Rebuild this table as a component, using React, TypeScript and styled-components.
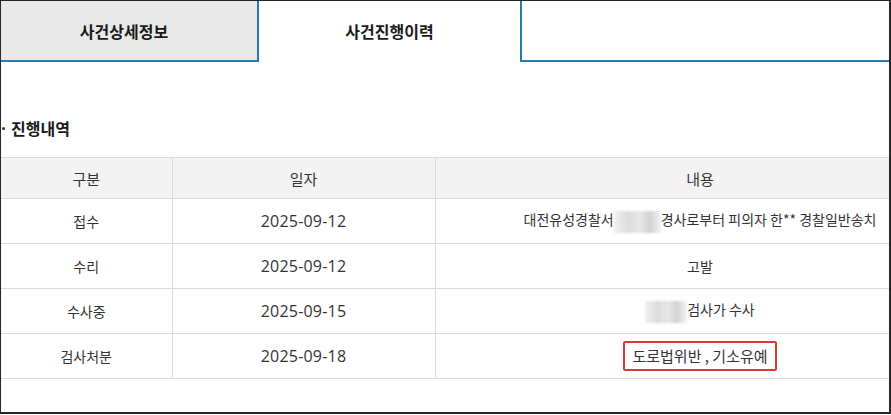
import React from "react";
import styled, { createGlobalStyle } from "styled-components";

const Global = createGlobalStyle`
  html, body { margin: 0; padding: 0; background: #ffffff; }
  body { font-family: "Noto Sans CJK KR", "Noto Sans", sans-serif; color: #222; }
`;

const Frame = styled.div`
  box-sizing: border-box;
  width: 891px;
  height: 414px;
  border: 2px solid #262626;
  border-top-width: 1px;
  border-left-width: 1px;
  overflow: hidden;
  background: #fff;
`;

const Tabs = styled.div`
  display: grid;
  grid-template-columns: 258px 263px 1fr;
  height: 61px;
`;

const Tab = styled.div<{ $active?: boolean; $empty?: boolean }>`
  box-sizing: border-box;
  display: flex;
  align-items: center;
  justify-content: center;
  font-size: 16px;
  font-weight: 700;
  color: #1a1a1a;
  background: ${(p) => (p.$active || p.$empty ? "#ffffff" : "#e9e9e9")};
  border-bottom: ${(p) => (p.$active ? "none" : "2px solid #2a7aae")};
  border-right: ${(p) => (p.$empty ? "none" : "2px solid #2a7aae")};
  padding-bottom: ${(p) => (p.$active ? "2px" : "0")};
  padding-right: ${(p) => (p.$active || p.$empty ? "0" : "10px")};
`;

const Section = styled.div`
  padding-top: 54px;
`;

const Title = styled.h3`
  margin: 0 0 17px 0;
  font-size: 16px;
  font-weight: 700;
  color: #1a1a1a;
  line-height: 24px;
  display: flex;
  align-items: center;
  gap: 6px;
  &::before {
    content: "";
    width: 3px;
    height: 3px;
    background: #333;
    border-radius: 50%;
    margin-left: 1px;
  }
`;

const Table = styled.table`
  border-collapse: collapse;
  width: 964px;
  table-layout: fixed;
`;

const Th = styled.th`
  height: 40px;
  padding: 0;
  background: #f3f3f3;
  border-top: 1px solid #dcdcdc;
  border-bottom: 1px solid #dcdcdc;
  border-right: 1px solid #dcdcdc;
  font-size: 15px;
  font-weight: 400;
  color: #333;
  text-align: center;
`;

const Td = styled.td`
  height: 44px;
  padding: 0;
  border-bottom: 1px solid #dcdcdc;
  border-right: 1px solid #dcdcdc;
  font-size: 14px;
  color: #333;
  text-align: center;
  white-space: nowrap;
`;

const DateText = styled.span`
  font-family: "Open Sans", "Noto Sans", sans-serif;
  font-size: 16px;
  letter-spacing: 0.2px;
  color: #333;
`;

const Blur = styled.span<{ $w: number }>`
  display: inline-block;
  width: ${(p) => p.$w}px;
  height: 22px;
  vertical-align: middle;
  background: linear-gradient(90deg, #f1f1f1 0%, #dcdcdc 30%, #e8e8e8 55%, #d2d2d2 75%, #f3f3f3 100%);
  filter: blur(1px);
`;

const Highlight = styled.span`
  display: inline-block;
  border: 2px solid #d83a3a;
  border-radius: 2px;
  padding: 3px 7px;
  line-height: 20px;
  font-size: 15px;
`;

const rows = [
  { type: "접수", date: "2025-09-12", content: <>대전유성경찰서<Blur $w={47} />경사로부터 피의자 한** 경찰일반송치</> },
  { type: "수리", date: "2025-09-12", content: <>고발</> },
  { type: "수사중", date: "2025-09-15", content: <><Blur $w={42} />검사가 수사</> },
  { type: "검사처분", date: "2025-09-18", content: <Highlight>도로법위반 , 기소유예</Highlight> },
];

export default function App() {
  return (
    <>
      <Global />
      <Frame>
        <Tabs>
          <Tab>사건상세정보</Tab>
          <Tab $active>사건진행이력</Tab>
          <Tab $empty />
        </Tabs>
        <Section>
          <Title>진행내역</Title>
          <Table>
            <colgroup>
              <col style={{ width: 171 }} />
              <col style={{ width: 263 }} />
              <col style={{ width: 530 }} />
            </colgroup>
            <thead>
              <tr>
                <Th>구분</Th>
                <Th>일자</Th>
                <Th>내용</Th>
              </tr>
            </thead>
            <tbody>
              {rows.map((r) => (
                <tr key={r.type}>
                  <Td>{r.type}</Td>
                  <Td><DateText>{r.date}</DateText></Td>
                  <Td>{r.content}</Td>
                </tr>
              ))}
            </tbody>
          </Table>
        </Section>
      </Frame>
    </>
  );
}
